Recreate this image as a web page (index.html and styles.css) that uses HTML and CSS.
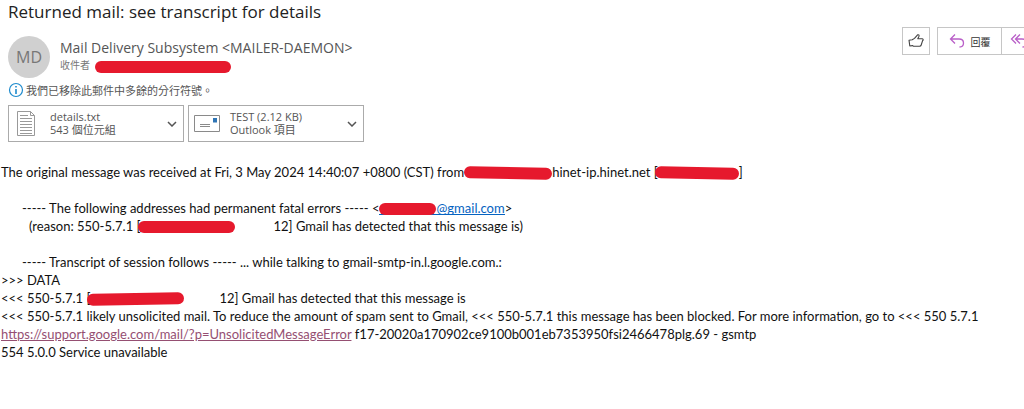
FILE: index.html
```html
<!DOCTYPE html>
<html lang="zh-Hant">

<head>
    <meta charset="UTF-8">
    <meta name="viewport" content="width=device-width, initial-scale=1.0">
    <title>Returned mail: see transcript for details</title>
    <link rel="stylesheet" href="styles.css">
</head>

<body>
    <header class="head">
        <h1 class="subject">Returned mail: see transcript for details</h1>
        <div class="head-row">
            <div class="avatar">MD</div>
            <div class="sender">
                <div class="from">Mail Delivery Subsystem &lt;MAILER-DAEMON&gt;</div>
                <div class="to">收件者 <span class="mark mark-to"></span></div>
            </div>
            <div class="tools">
                <button class="btn like" type="button" aria-label="like">
                    <svg width="16" height="16" viewBox="0 0 16 16" fill="none" stroke="#444" stroke-width="1.1" stroke-linejoin="round">
                        <path d="M1 7.2L4.2 6.8L6.5 5.4L9.6 1.8C10.6 1.4 11.3 2.2 11 3.2L9.8 5.8H14.3C15.5 6 15.4 7.3 14.6 7.6L13.2 12C13 12.8 12.4 13.2 11.6 13.2H5.5L4.4 12.6L1.8 13Z"/>
                    </svg>
                </button>
                <div class="reply-group">
                    <button class="btn reply" type="button">
                        <svg width="16" height="16" viewBox="0 0 16 16" fill="none" stroke="#b95fc8" stroke-width="1.3">
                            <path d="M6 1.5L1.5 6L6 10.5M1.5 6H10C13 6 14.5 8 14.5 10C14.5 12.5 13 14 10.5 14"/>
                        </svg>
                        回覆
                    </button>
                    <button class="btn reply-all" type="button" aria-label="全部回覆">
                        <svg width="20" height="16" viewBox="0 0 20 16" fill="none" stroke="#b95fc8" stroke-width="1.3">
                            <path d="M6 1.5L1.5 6L6 10.5M10 1.5L5.5 6L10 10.5M5.5 6H12C15 6 16.5 8 16.5 10C16.5 12.5 15 14 12.5 14"/>
                        </svg>
                    </button>
                </div>
            </div>
        </div>
        <div class="notice">
            <svg width="16" height="16" viewBox="0 0 16 16" fill="none" stroke="#1e8bcd">
                <circle cx="8" cy="8" r="6.5" stroke-width="1.2"/>
                <path d="M8 7V12M8 4V5.6" stroke-width="1.6"/>
            </svg>
            我們已移除此郵件中多餘的分行符號。
        </div>
        <div class="files">
            <button class="file" type="button">
                <svg width="26" height="28" viewBox="0 0 26 28" fill="none" stroke="#999">
                    <path d="M3.5 1.5H16.5L20.5 5.5V25.5H3.5ZM16.5 1.5V5.5H20.5"/>
                    <path d="M6 5.5H14M6 8.5H18M6 11.5H18M6 14.5H18M6 17.5H18M6 20.5H18M6 23.5H18"/>
                </svg>
                <span class="file-text">details.txt<br>543 個位元組</span>
                <svg class="arrow" width="10" height="6" viewBox="0 0 10 6" fill="none" stroke="#555" stroke-width="1.5">
                    <path d="M1 1L5 5L9 1"/>
                </svg>
            </button>
            <button class="file" type="button">
                <svg width="26" height="28" viewBox="0 0 26 28" fill="none" stroke="#8a8a8a">
                    <path d="M0.5 5.5H25.5V21.5H0.5ZM6 14.5H16M6 16.5H16"/>
                    <path d="M19 8H23V12.5H19Z" fill="#2f75b5" stroke="none"/>
                </svg>
                <span class="file-text">TEST (2.12 KB)<br>Outlook 項目</span>
                <svg class="arrow" width="10" height="6" viewBox="0 0 10 6" fill="none" stroke="#555" stroke-width="1.5">
                    <path d="M1 1L5 5L9 1"/>
                </svg>
            </button>
        </div>
    </header>

    <main class="message">
        <p>The original message was received at Fri, 3 May 2024 14:40:07 +0800 (CST) from<span class="mark mark-host"></span>hinet-ip.hinet.net [<span class="mark mark-ip"></span>]</p>
        <p class="step">----- The following addresses had permanent fatal errors ----- &lt;<a href="#" class="mail"><span class="mark mark-user"></span>@gmail.com</a>&gt;</p>
        <p class="step-in">(reason: 550-5.7.1 [<span class="mark mark-reason"></span>12] Gmail has detected that this message is)</p>
        <p class="step">----- Transcript of session follows ----- ... while talking to gmail-smtp-in.l.google.com.:</p>
        <p>&gt;&gt;&gt; DATA</p>
        <p>&lt;&lt;&lt; 550-5.7.1 [<span class="mark mark-reason tilt"></span>12] Gmail has detected that this message is</p>
        <p>&lt;&lt;&lt; 550-5.7.1 likely unsolicited mail. To reduce the amount of spam sent to Gmail, &lt;&lt;&lt; 550-5.7.1 this message has been blocked. For more information, go to &lt;&lt;&lt; 550 5.7.1 <a href="#" class="visited">https://support.google.com/mail/?p=UnsolicitedMessageError</a> f17-20020a170902ce9100b001eb7353950fsi2466478plg.69 - gsmtp</p>
        <p>554 5.0.0 Service unavailable</p>
    </main>
</body>

</html>
```
FILE: styles.css
```css
* {
    margin: 0;
    padding: 0;
    box-sizing: border-box;
}
body {
    background: #fff;
    overflow-x: hidden;
    font-family: "Open Sans", "Noto Sans CJK TC", sans-serif;
    color: #555;
}
button {
    font-family: inherit;
    color: inherit;
    background: #fff;
    cursor: pointer;
}
svg {
    flex: none;
}
.head {
    padding-left: 8px;
}
.subject {
    font-size: 17px;
    line-height: 24px;
    font-weight: normal;
    color: #222;
}
.head-row {
    display: flex;
    align-items: flex-start;
    padding-top: 3px;
    height: 58px;
}
.avatar {
    width: 42px;
    height: 42px;
    margin-top: 9px;
    border-radius: 50%;
    background: #d0d0d0;
    color: #777;
    font-size: 16px;
    line-height: 42px;
    text-align: center;
}
.sender {
    flex: 1;
    padding: 12px 0 0 10px;
}
.from {
    font-size: 14px;
    line-height: 18px;
}
.to {
    display: flex;
    align-items: center;
    font-size: 10px;
    line-height: 16px;
    color: #777;
}
.tools {
    display: flex;
    gap: 7px;
    margin-right: -31px;
}
.btn {
    display: flex;
    align-items: center;
    justify-content: center;
    height: 28px;
    border: 1px solid #c6c6c6;
    font-size: 10px;
}
.like {
    width: 28px;
}
.reply-group {
    display: flex;
}
.reply {
    width: 65px;
    gap: 6px;
    color: #333;
}
.reply-all {
    width: 54px;
    margin-left: -1px;
    padding-left: 8px;
    justify-content: flex-start;
}
.notice {
    display: flex;
    align-items: center;
    gap: 2px;
    height: 16px;
    font-size: 11px;
}
.files {
    display: flex;
    gap: 4px;
    padding-top: 7px;
}
.file {
    display: flex;
    align-items: center;
    width: 176px;
    height: 37px;
    padding: 0 6px 0 5px;
    border: 1px solid #ababab;
    font-size: 11px;
    line-height: 13px;
    text-align: left;
}
.file-text {
    flex: 1;
    padding: 0 0 2px 10px;
}

/* message text */
.message {
    padding: 21px 1px 0;
    font-family: Lato, "Liberation Sans", sans-serif;
    font-size: 13px;
    line-height: 18px;
    color: #111;
}
.step {
    margin-top: 18px;
    padding-left: 21px;
}
.step-in {
    padding-left: 28px;
}
.mail {
    display: inline-block;
    height: 16px;
    line-height: 18px;
    color: #0563c1;
    text-decoration: none;
    border-bottom: 1px solid #0563c1;
}
.visited {
    color: #954f72;
}

/* covered words */
.mark {
    display: inline-block;
    height: 12px;
    border-radius: 6px;
    background: #e6192d;
    vertical-align: -2px;
}
.mark-to {
    width: 136px;
    margin-left: 5px;
    margin-top: 3px;
}
.mark-host {
    width: 88px;
    transform: rotate(1deg);
}
.mark-ip {
    width: 84px;
    margin-left: -3px;
    transform: rotate(1deg);
}
.mark-user {
    width: 57px;
}
.mark-reason {
    width: 97px;
    margin: 0 39px 0 -3px;
}
.tilt {
    margin-right: 35px;
    transform: rotate(-1deg);
}
```
